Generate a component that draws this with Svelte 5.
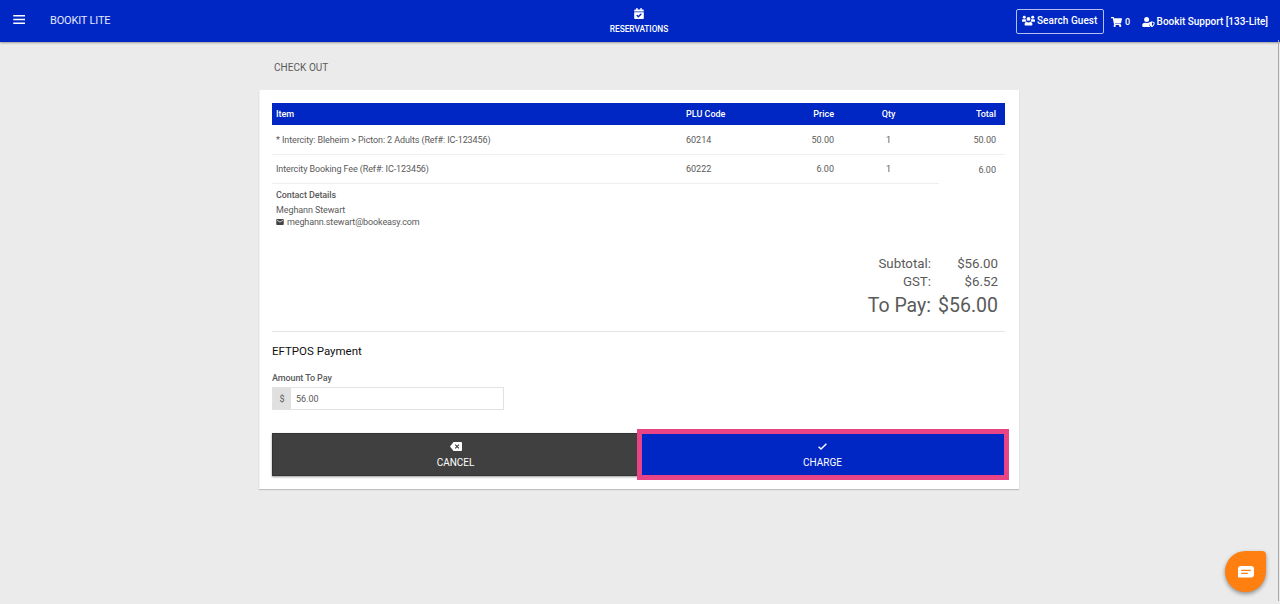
<script lang="ts">
  type Item = { name: string; plu: string; price: string; qty: number; total: string };

  const items: Item[] = [
    { name: "* Intercity: Bleheim > Picton: 2 Adults (Ref#: IC-123456)", plu: "60214", price: "50.00", qty: 1, total: "50.00" },
    { name: "Intercity Booking Fee (Ref#: IC-123456)", plu: "60222", price: "6.00", qty: 1, total: "6.00" },
  ];

  let amount = $state("56.00");
</script>

<div class="page">
  <header class="navbar">
    <div class="nav-left">
      <svg class="menu-icon" viewBox="0 0 12 9" fill="#fff">
        <path d="M0 0h12v1.6H0zM0 3.7h12v1.6H0zM0 7.4h12V9H0z" />
      </svg>
      <span class="brand">BOOKIT LITE</span>
    </div>
    <a class="nav-center" href="#reservations">
      <svg class="calendar-icon" viewBox="0 0 448 512" fill="#fff">
        <path d="M436 160H12a12 12 0 0 1-12-12v-36c0-26.500 21.500-48 48-48h48V12c0-6.600 5.400-12 12-12h40c6.600 0 12 5.400 12 12v52h128V12c0-6.600 5.400-12 12-12h40c6.600 0 12 5.400 12 12v52h48c26.500 0 48 21.500 48 48v36a12 12 0 0 1-12 12zM12 192h424a12 12 0 0 1 12 12v260c0 26.500-21.500 48-48 48H48c-26.500 0-48-21.500-48-48V204a12 12 0 0 1 12-12zm334 96-29-29a12 12 0 0 0-17 0L195 364l-46-46a12 12 0 0 0-17 0l-28 28a12 12 0 0 0 0 17l82 83a12 12 0 0 0 17 0l143-141a12 12 0 0 0 0-17z" />
      </svg>
      <span>RESERVATIONS</span>
    </a>
    <div class="nav-right">
      <button class="search-btn">
        <svg class="users-icon" viewBox="0 0 640 512" fill="#fff">
          <circle cx="112" cy="96" r="72" />
          <circle cx="528" cy="96" r="72" />
          <circle cx="320" cy="176" r="96" />
          <path d="M0 288v-32c0-40 26-64 64-64h96c12 0 25 4 35 12-8 45 8 87 39 116H32c-18 0-32-14-32-32zM640 288v-32c0-40-26-64-64-64h-96c-12 0-25 4-35 12 8 45-8 87-39 116h202c18 0 32-14 32-32zM128 456v-28c0-54 42-96 96-96h12c54 24 114 24 168 0h12c54 0 96 42 96 96v28c0 27-21 48-48 48H176c-27 0-48-21-48-48z" />
        </svg>
        <span>Search Guest</span>
      </button>
      <span class="cart">
        <svg class="cart-icon" viewBox="0 0 576 512" fill="#fff">
          <path d="m528 301 47-208c4-15-8-29-23-29H159l-9-45c-2-11-12-19-24-19H24C11 0 0 11 0 24v16c0 13 11 24 24 24h70l70 343a56 56 0 1 0 67 9h210a56 56 0 1 0 64-10l5-25c4-15-8-29-23-29H218l-7-32h294c11 0 21-8 23-19z" />
        </svg>
        <span>0</span>
      </span>
      <span class="account">
        <svg class="account-icon" viewBox="0 0 640 512" fill="#fff">
          <circle cx="224" cy="128" r="128" />
          <path d="M0 422c0-74 60-134 134-134h17c46 21 100 21 146 0h17c12 0 25 2 38 6-8 90 15 164 66 217-6 1-12 1-18 1H48c-27 0-48-21-48-48z" />
          <path d="m622 271-116-45c-9-3-18-3-26 0l-116 45c-12 5-20 16-20 28 0 111 70 187 136 211 8 3 17 3 26 0 53-20 134-88 134-211 0-12-7-23-18-28zM496 454V274l94 36c-5 77-52 124-94 144z" />
        </svg>
        <span>Bookit Support [133-Lite]</span>
      </span>
    </div>
  </header>

  <main class="content">
    <h1 class="page-title">CHECK OUT</h1>

    <section class="card">
      <div class="row row-head">
        <span>Item</span>
        <span>PLU Code</span>
        <span class="price">Price</span>
        <span class="qty">Qty</span>
        <span class="total">Total</span>
      </div>
      {#each items as item (item.plu)}
        <div class="row">
          <span class="name">{item.name}</span>
          <span>{item.plu}</span>
          <span class="price">{item.price}</span>
          <span class="qty">{item.qty}</span>
          <span class="total">{item.total}</span>
        </div>
      {/each}

      <div class="contact">
        <strong>Contact Details</strong>
        <span class="contact-name">Meghann Stewart</span>
        <span class="contact-email">
          <svg class="mail-icon" viewBox="0 0 20 16" fill="#444">
            <path d="M2 0h16a2 2 0 0 1 2 2v12a2 2 0 0 1-2 2H2a2 2 0 0 1-2-2V2a2 2 0 0 1 2-2zm16 4V2l-8 5-8-5v2l8 5z" />
          </svg>
          meghann.stewart@bookeasy.com
        </span>
      </div>

      <div class="totals">
        <span>Subtotal:</span><span>$56.00</span>
        <span>GST:</span><span>$6.52</span>
        <span class="to-pay">To Pay:</span><span class="to-pay">$56.00</span>
      </div>

      <div class="payment">
        <h2>EFTPOS Payment</h2>
        <label for="amount">Amount To Pay</label>
        <div class="amount-group">
          <span class="prefix">$</span>
          <input id="amount" type="text" bind:value={amount} />
        </div>
      </div>

      <div class="actions">
        <button class="action cancel">
          <svg class="cancel-icon" viewBox="0 0 12 9">
            <path d="M3.500 0H11a1 1 0 0 1 1 1v7a1 1 0 0 1-1 1H3.500L0 4.500z" fill="#fff" />
            <path d="m5.200 2.600 3.800 3.800M9 2.600 5.200 6.400" stroke="#404040" stroke-width="1.100" fill="none" />
          </svg>
          <span>CANCEL</span>
        </button>
        <button class="action charge">
          <svg class="check-icon" viewBox="0 0 9 7">
            <path d="m.6 3.700 2.400 2.300L8.400.700" stroke="#fff" stroke-width="1.400" fill="none" />
          </svg>
          <span>CHARGE</span>
        </button>
      </div>
    </section>
  </main>

  <div class="scroll-edge"></div>
  <button class="chat" aria-label="Chat">
    <svg class="chat-icon" viewBox="0 0 16 12">
      <path d="M3 0h10a3 3 0 0 1 3 3v5.500a3 3 0 0 1-3 3H0V3a3 3 0 0 1 3-3z" fill="#fff" />
      <path d="M3.200 4.400h9.600M3.200 7.400h6.600" stroke="#ff7f11" stroke-width="1.200" />
    </svg>
  </button>
</div>

<style>
  :global(body) {
    background: #ebebeb;
  }

  .page {
    position: relative;
    box-sizing: border-box;
    height: 604px;
    overflow: hidden;
    background: #ebebeb;
    color: #5a5a5a;
    font-family: Roboto, sans-serif;
    font-size: 9px;
    line-height: 12px;
  }

  .page * {
    box-sizing: border-box;
  }

  svg {
    display: block;
    flex-shrink: 0;
  }

  button {
    font: inherit;
    cursor: pointer;
  }

  .navbar {
    display: grid;
    grid-template-columns: 1fr auto 1fr;
    height: 42px;
    background: #0027c4;
    box-shadow: 0 1px 2px rgba(0, 0, 0, 0.35);
    color: #fff;
  }

  .nav-left {
    display: flex;
    align-items: center;
    gap: 25px;
    height: 39px;
    padding-left: 12.500px;
  }

  .menu-icon {
    width: 12.500px;
    height: 9px;
  }

  .brand {
    padding-top: 2px;
    font-size: 11px;
    letter-spacing: -0.18px;
    color: #e4e8fa;
  }

  .nav-center {
    display: flex;
    flex-direction: column;
    align-items: center;
    padding: 8px 2px 0 0;
    font-size: 8.300px;
    font-weight: 500;
    letter-spacing: -0.04px;
    color: #fff;
    text-decoration: none;
  }

  .calendar-icon {
    width: 10px;
    height: 11px;
    margin-bottom: 4px;
  }

  .nav-right {
    display: flex;
    justify-content: flex-end;
    align-items: center;
    height: 42px;
    padding-right: 12px;
    font-size: 10px;
    font-weight: 500;
  }

  .search-btn {
    display: flex;
    align-items: center;
    gap: 2px;
    width: 88px;
    height: 25px;
    padding: 0 0 1px 5px;
    border: 1px solid #b3bfee;
    border-radius: 2px;
    background: none;
    color: #fff;
    letter-spacing: 0.06px;
    white-space: nowrap;
  }

  .users-icon {
    width: 13px;
    height: 11px;
  }

  .cart {
    display: flex;
    align-items: center;
    gap: 3px;
    margin-left: 7px;
    padding-top: 2px;
    font-size: 9px;
  }

  .cart-icon {
    width: 11px;
    height: 10px;
  }

  .account {
    display: flex;
    align-items: center;
    gap: 2px;
    margin-left: 11.500px;
    padding-top: 1px;
    letter-spacing: -0.02px;
    white-space: nowrap;
  }

  .account-icon {
    width: 13px;
    height: 10px;
  }

  .content {
    width: 760px;
    margin-left: 259px;
  }

  .page-title {
    margin: 0;
    padding: 20px 0 16px 15px;
    font-size: 10px;
    font-weight: 400;
    letter-spacing: 0.05px;
    line-height: 12px;
  }

  .card {
    height: 399px;
    padding: 13px 14px 0 12px;
    border-left: 1px solid #f3f3f3;
    background: #fff;
    box-shadow: 0 1px 1px rgba(0, 0, 0, 0.18);
  }

  .row {
    display: grid;
    grid-template-columns: 410px 70px 86px 101px 1fr;
    align-items: center;
    height: 30px;
    background: linear-gradient(#eee, #eee) left bottom / 100% 1px no-repeat;
  }

  .row:nth-child(3) {
    height: 29px;
    padding-bottom: 1px;
    background-size: 667px 1px;
  }

  .row > span {
    padding: 0 4px;
  }

  .row .name {
    letter-spacing: -0.1px;
  }

  .row-head {
    height: 22px;
    background: #0027c4;
    color: #fff;
    font-weight: 500;
  }

  .price {
    text-align: right;
  }

  .qty {
    text-align: center;
  }

  .row > .total {
    padding-right: 9px;
    text-align: right;
  }

  .row:nth-child(3) > .total {
    padding-top: 2px;
  }

  .contact {
    display: flex;
    flex-direction: column;
    height: 70px;
    padding: 5px 4px 0;
    letter-spacing: -0.1px;
  }

  .contact strong {
    font-weight: 500;
    margin-bottom: 3px;
  }

  .contact-email {
    display: flex;
    align-items: center;
    gap: 3px;
    letter-spacing: -0.13px;
  }

  .mail-icon {
    width: 8px;
    height: 6px;
  }

  .totals {
    display: grid;
    grid-template-columns: 1fr 67px;
    grid-template-rows: 19px 18px 30px;
    align-items: center;
    height: 77.500px;
    padding-right: 7px;
    border-bottom: 1px solid #e4e4e4;
    font-size: 13.300px;
    line-height: 18px;
    text-align: right;
  }

  .to-pay {
    font-size: 19.500px;
    line-height: 28px;
  }

  .payment h2 {
    margin: 0;
    padding-top: 11px;
    font-size: 11.500px;
    font-weight: 400;
    line-height: 16px;
    color: #111;
  }

  .payment label {
    display: block;
    margin-top: 13.500px;
    font-weight: 500;
    letter-spacing: -0.1px;
  }

  .amount-group {
    display: flex;
    width: 232px;
    height: 23px;
    margin-top: 3px;
    border: 1px solid #e2e2e2;
  }

  .prefix {
    width: 18px;
    background: #e0e0e0;
    line-height: 22px;
    text-align: center;
  }

  .amount-group input {
    flex: 1;
    min-width: 0;
    padding: 1px 5px 0;
    border: 0;
    background: #fff;
    color: #5a5a5a;
    font: inherit;
  }

  .actions {
    display: grid;
    grid-template-columns: 367px 364px;
    gap: 2px;
    margin-top: 23px;
  }

  .action {
    display: flex;
    flex-direction: column;
    align-items: center;
    height: 43px;
    padding: 9px 0 0;
    border: 0;
    color: #fff;
    font-size: 10px;
  }

  .action span {
    margin-top: auto;
    padding-bottom: 7px;
  }

  .cancel {
    padding-top: 8px;
    border: 1px solid #333;
    background: #404040;
    box-shadow: 0 1px 2px rgba(0, 0, 0, 0.4);
  }

  .cancel span {
    padding-bottom: 6px;
  }

  .charge {
    padding-right: 1px;
    outline: 5px solid #e94586;
    outline-offset: -1px;
    background: #0027c4;
  }

  .cancel-icon {
    width: 12px;
    height: 9px;
  }

  .check-icon {
    width: 9px;
    height: 7px;
    margin-top: 1px;
  }

  .scroll-edge {
    position: absolute;
    top: 40px;
    right: 1px;
    width: 1px;
    height: 561px;
    background: #a8a8a8;
  }

  .chat {
    position: absolute;
    left: 1225px;
    top: 551px;
    display: flex;
    align-items: center;
    justify-content: center;
    width: 41px;
    height: 41px;
    padding: 0;
    border: 0;
    border-radius: 50% 4px 50% 50%;
    background: #ff7f11;
    box-shadow: 0 2px 4px rgba(0, 0, 0, 0.4);
  }

  .chat-icon {
    width: 16px;
    height: 12px;
  }
</style>
